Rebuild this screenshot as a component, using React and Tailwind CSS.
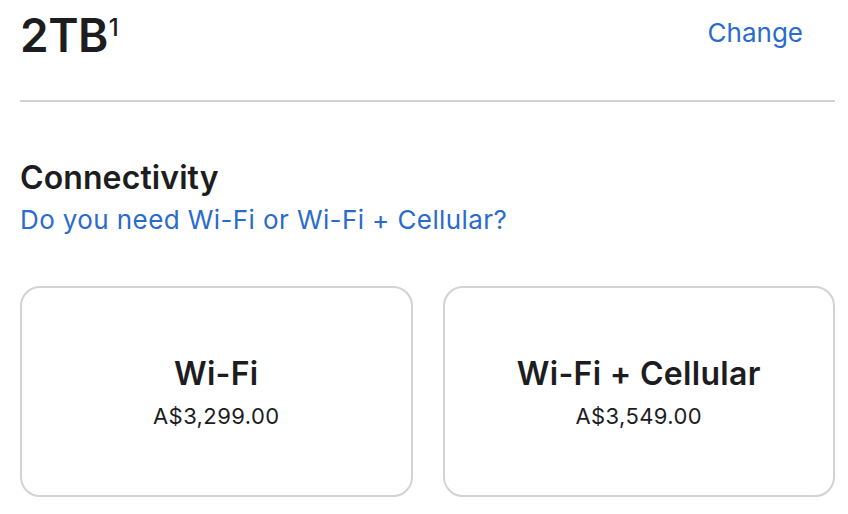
import React from 'react';

const options = [
  { name: 'Wi-Fi', price: 'A$3,299.00' },
  { name: 'Wi-Fi + Cellular', price: 'A$3,549.00' },
];

export default function App() {
  return (
    <div className="w-[848px] h-[514px] bg-white overflow-hidden text-[#1d1d1f]" style={{ fontFamily: 'Inter, "Noto Sans", sans-serif' }}>
      <div className="ml-[20px] w-[815px]">
        <div className="flex items-start justify-between pt-[8px] h-[102px] border-b-2 border-[#d2d2d7]">
          <h1 className="flex items-start text-[46px] font-semibold leading-[54px] tracking-[-0.5px]">
            <span>2TB</span>
            <span className="text-[24px] font-medium leading-[24px] mt-[8px] ml-[1px]">1</span>
          </h1>
          <a href="#" className="text-[26px] leading-[34px] text-[#2a6bcc] mr-[32px] mt-[8px]">Change</a>
        </div>

        <div className="mt-[56px]">
          <h2 className="text-[32px] font-semibold leading-[40px] tracking-[0.1px]">Connectivity</h2>
          <a href="#" className="block text-[26px] leading-[34px] tracking-[0.4px] text-[#2a6bcc] mt-[5px]">Do you need Wi-Fi or Wi-Fi + Cellular?</a>
        </div>

        <div className="grid grid-cols-2 gap-[30px] mt-[49px]">
          {options.map((o) => (
            <button
              key={o.name}
              className="h-[211px] rounded-[20px] border-2 border-[#d2d2d7] bg-white flex flex-col items-center justify-center"
            >
              <span className="text-[32px] font-semibold leading-[40px] tracking-[0.3px]">{o.name}</span>
              <span className="text-[22px] leading-[28px] tracking-[0.4px] mt-[8px]">{o.price}</span>
            </button>
          ))}
        </div>
      </div>
    </div>
  );
}
